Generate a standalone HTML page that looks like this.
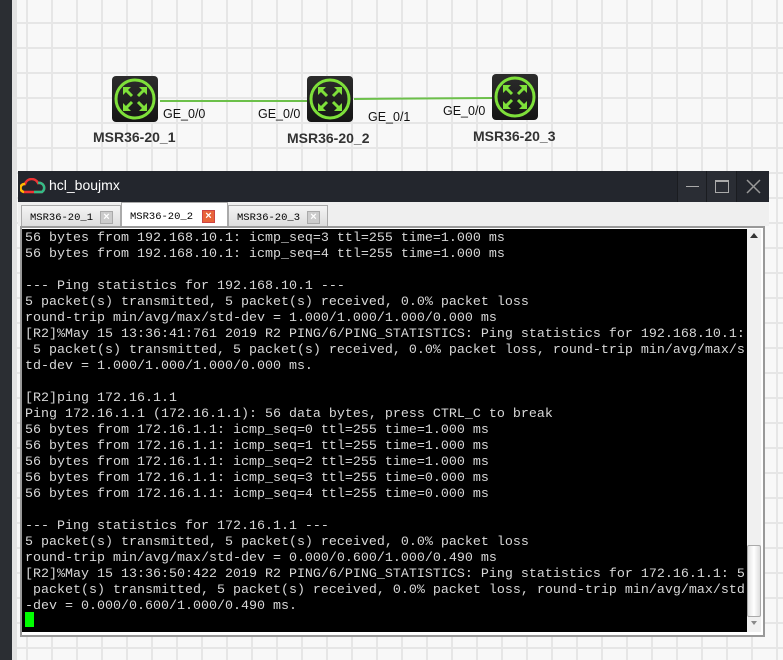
<!DOCTYPE html>
<html><head><meta charset="utf-8"><style>
*{margin:0;padding:0;box-sizing:border-box}
body{width:783px;height:660px;overflow:hidden;position:relative;font-family:"Liberation Sans",sans-serif;
background-color:#f8f8f8;
background-image:linear-gradient(#e6e6e6 2px,transparent 2px),linear-gradient(90deg,#e6e6e6 2px,transparent 2px);
background-size:25px 25px;background-position:0 22px,26px 0}
.ls{position:absolute;left:0;top:0;width:12px;height:660px;background:#2b2e33}
.ls2{position:absolute;left:12px;top:0;width:5px;height:660px;background:#e2e2e2}
.rt{position:absolute;width:46px;height:46px;border-radius:4px;background:linear-gradient(#2c2c2c,#151515)}
.rt svg{position:absolute;left:0;top:0}
.lbl{position:absolute;font-size:12.5px;color:#111}
.nm{position:absolute;font-size:14px;font-weight:bold;color:#333}
.win{position:absolute;left:18px;top:171px;width:751px;height:489px}
.tb{position:absolute;left:0;top:0;width:751px;height:31px;background:#23262d}
.title{position:absolute;left:31px;top:6px;color:#fff;font-size:14px}
.tabs{position:absolute;left:0;top:31px;width:751px;height:24px;background:#efefef}
.tab{position:absolute;top:3px;height:21px;border:1px solid #aaa;border-bottom:none;background:linear-gradient(#f4f4f4,#ddd);font-family:"Liberation Mono",monospace;font-size:10.5px;color:#000;padding:6px 0 0 8px}
.tab.a{top:0;height:25px;background:#fff;padding-top:8px}
.x{position:absolute;top:5px;width:13px;height:13px;background:#ccc;border:1px solid #aaa;color:#fff;font-size:11px;line-height:11px;text-align:center;font-family:"Liberation Sans",sans-serif;font-weight:bold}
.tab.a .x{top:7px;background:#e8643a;border-color:#c44}
.frame{position:absolute;left:2px;top:55px;width:745px;height:411px;border:2px solid #999;background:#fff}
.term{position:absolute;left:4px;top:58px;width:725px;height:403px;background:#000}
pre{position:absolute;left:7px;top:60px;font-family:"Liberation Mono",monospace;font-size:13.33px;line-height:16px;color:#d8d8d8;white-space:pre}
.sb{position:absolute;left:729px;top:58px;width:14px;height:403px;background:#f0f0f0}
.thumb{position:absolute;left:729px;top:374px;width:14px;height:72px;background:linear-gradient(90deg,#e4e4e4,#fff,#ddd);border:1px solid #aaa;border-radius:2px}
.cur{position:absolute;left:25px;top:612px;width:9px;height:15px;background:#0f0}
.wb{position:absolute;top:0;height:31px;background:#2a2d34;border-left:1px solid #1a1c20}
</style></head><body>
<div class="ls"></div><div class="ls2"></div>
<svg style="position:absolute;left:0;top:0" width="783" height="170"><line x1="160" y1="101" x2="308" y2="101" stroke="#6cc04a" stroke-width="2"/><line x1="354" y1="99" x2="494" y2="98" stroke="#6cc04a" stroke-width="2"/></svg>
<div class="rt" style="left:112px;top:76px"><svg width="46" height="46"><circle cx="23" cy="23" r="19" fill="none" stroke="#7ee03a" stroke-width="3"/><g stroke="#7ee03a" stroke-width="3" fill="none"><path d="M14 14l6 6M32 14l-6 6M14 32l6-6M32 32l-6-6"/></g><g fill="#7ee03a"><path d="M11 11h8l-8 8zM35 11v8l-8-8zM11 35v-8l8 8zM35 35h-8l8-8z"/></g></svg></div>
<div class="rt" style="left:307px;top:76px"><svg width="46" height="46"><circle cx="23" cy="23" r="19" fill="none" stroke="#7ee03a" stroke-width="3"/><g stroke="#7ee03a" stroke-width="3" fill="none"><path d="M14 14l6 6M32 14l-6 6M14 32l6-6M32 32l-6-6"/></g><g fill="#7ee03a"><path d="M11 11h8l-8 8zM35 11v8l-8-8zM11 35v-8l8 8zM35 35h-8l8-8z"/></g></svg></div>
<div class="rt" style="left:492px;top:74px"><svg width="46" height="46"><circle cx="23" cy="23" r="19" fill="none" stroke="#7ee03a" stroke-width="3"/><g stroke="#7ee03a" stroke-width="3" fill="none"><path d="M14 14l6 6M32 14l-6 6M14 32l6-6M32 32l-6-6"/></g><g fill="#7ee03a"><path d="M11 11h8l-8 8zM35 11v8l-8-8zM11 35v-8l8 8zM35 35h-8l8-8z"/></g></svg></div>
<div class="lbl" style="left:163px;top:107px">GE_0/0</div>
<div class="lbl" style="left:258px;top:107px">GE_0/0</div>
<div class="lbl" style="left:368px;top:110px">GE_0/1</div>
<div class="lbl" style="left:443px;top:104px">GE_0/0</div>
<div class="nm" style="left:93px;top:129px">MSR36-20_1</div>
<div class="nm" style="left:287px;top:130px">MSR36-20_2</div>
<div class="nm" style="left:473px;top:128px">MSR36-20_3</div>
<div class="win">
<div class="tb"><svg style="position:absolute;left:2px;top:7px" width="26" height="16"><path d="M4 14a4 4 0 0 1 1-8a7 7 0 0 1 13-1a5 5 0 0 1 4 9z" fill="none" stroke="#e33" stroke-width="2.5"/><path d="M4 14a4 4 0 0 1 1-8" fill="none" stroke="#fb0" stroke-width="2.5"/><path d="M18 5a5 5 0 0 1 4 9h-8" fill="none" stroke="#3b8" stroke-width="2.5"/></svg><div class="title">hcl_boujmx</div>
<div class="wb" style="left:659px;width:29px"><div style="position:absolute;left:8px;top:15px;width:13px;height:1px;background:#aaa"></div></div>
<div class="wb" style="left:688px;width:30px"><div style="position:absolute;left:8px;top:9px;width:14px;height:13px;border:1px solid #aaa;border-top-width:2px"></div></div>
<div class="wb" style="left:718px;width:33px;background:#23262d"><svg style="position:absolute;left:9px;top:8px" width="15" height="15"><path d="M1 1L14 14M14 1L1 14" stroke="#999" stroke-width="1.5"/></svg></div>
</div>
<div class="tabs">
<div class="tab" style="left:3px;width:100px">MSR36-20_1<div class="x" style="left:78px">×</div></div>
<div class="tab a" style="left:103px;width:107px">MSR36-20_2<div class="x" style="left:80px">×</div></div>
<div class="tab" style="left:210px;width:100px">MSR36-20_3<div class="x" style="left:78px">×</div></div>
</div>
<div class="frame"></div>
<div class="term"></div>
<div class="sb"><div style="position:absolute;left:3px;top:4px;border:4px solid transparent;border-bottom:5px solid #333;border-top:none;width:0"></div><div style="position:absolute;left:4px;top:392px;border:3px solid transparent;border-top:4px solid #888;border-bottom:none;width:0"></div></div>
<div class="thumb"></div>
<pre>56 bytes from 192.168.10.1: icmp_seq=3 ttl=255 time=1.000 ms
56 bytes from 192.168.10.1: icmp_seq=4 ttl=255 time=1.000 ms

--- Ping statistics for 192.168.10.1 ---
5 packet(s) transmitted, 5 packet(s) received, 0.0% packet loss
round-trip min/avg/max/std-dev = 1.000/1.000/1.000/0.000 ms
[R2]%May 15 13:36:41:761 2019 R2 PING/6/PING_STATISTICS: Ping statistics for 192.168.10.1:
 5 packet(s) transmitted, 5 packet(s) received, 0.0% packet loss, round-trip min/avg/max/s
td-dev = 1.000/1.000/1.000/0.000 ms.

[R2]ping 172.16.1.1
Ping 172.16.1.1 (172.16.1.1): 56 data bytes, press CTRL_C to break
56 bytes from 172.16.1.1: icmp_seq=0 ttl=255 time=1.000 ms
56 bytes from 172.16.1.1: icmp_seq=1 ttl=255 time=1.000 ms
56 bytes from 172.16.1.1: icmp_seq=2 ttl=255 time=1.000 ms
56 bytes from 172.16.1.1: icmp_seq=3 ttl=255 time=0.000 ms
56 bytes from 172.16.1.1: icmp_seq=4 ttl=255 time=0.000 ms

--- Ping statistics for 172.16.1.1 ---
5 packet(s) transmitted, 5 packet(s) received, 0.0% packet loss
round-trip min/avg/max/std-dev = 0.000/0.600/1.000/0.490 ms
[R2]%May 15 13:36:50:422 2019 R2 PING/6/PING_STATISTICS: Ping statistics for 172.16.1.1: 5
 packet(s) transmitted, 5 packet(s) received, 0.0% packet loss, round-trip min/avg/max/std
-dev = 0.000/0.600/1.000/0.490 ms.</pre>
</div>
<div class="cur"></div>
</body></html>
